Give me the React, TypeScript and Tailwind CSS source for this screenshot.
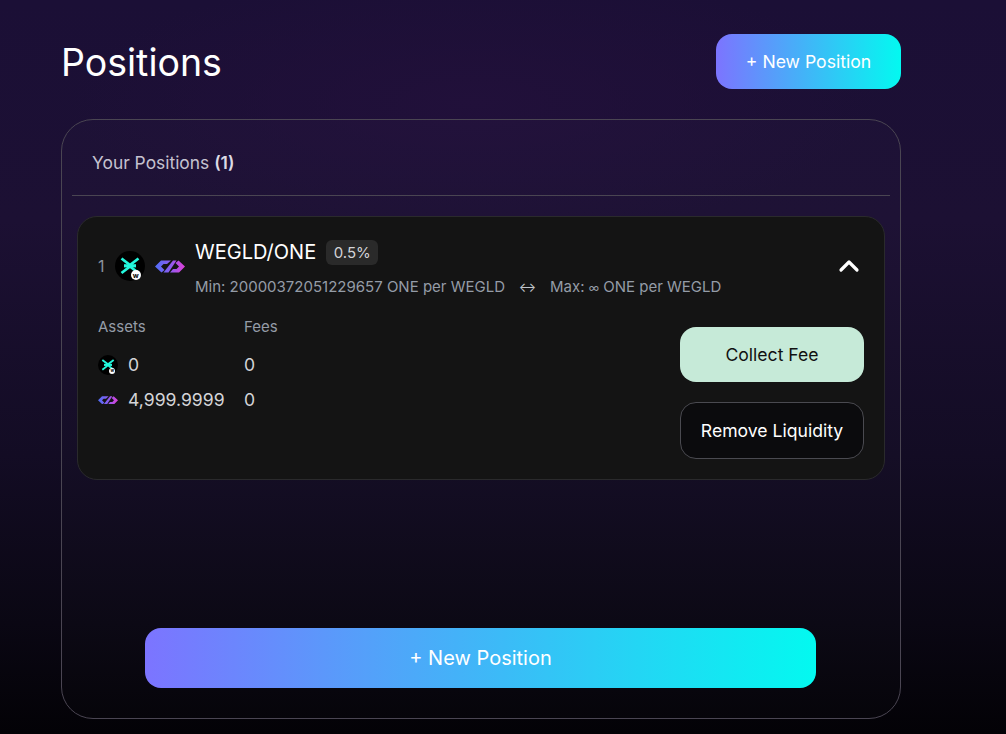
import { ChevronUp } from 'lucide-react';

const inter = { fontFamily: 'Inter, sans-serif' };

function MexIcon({ size, badge }: { size: number; badge: number }) {
  return (
    <div
      className="relative shrink-0 rounded-full bg-black"
      style={{ width: size, height: size }}
    >
      <svg viewBox="0 0 30 30" className="h-full w-full">
        <g fill="none" stroke="#23f7dd" strokeWidth="2.8">
          <path d="M6.5 7.5 L15 14 L23.5 7.5" />
          <path d="M6.5 22 L15 15.5 L23.5 22" />
        </g>
        <rect x="9" y="13.2" width="12" height="3.2" fill="#23f7dd" />
      </svg>
      <div
        className="absolute flex items-center justify-center rounded-full bg-white font-bold leading-none text-black"
        style={{ width: badge, height: badge, right: size * 0.14, bottom: 1, fontSize: badge * 0.7 }}
      >
        w
      </div>
    </div>
  );
}

function OneIcon({ width, id }: { width: number; id: string }) {
  return (
    <svg viewBox="0 0 30 13" style={{ width, height: (width * 13) / 30 }} className="shrink-0">
      <defs>
        <linearGradient id={id} gradientUnits="userSpaceOnUse" x1="0" x2="30" y1="0" y2="0">
          <stop offset="0" stopColor="#4f6ef7" />
          <stop offset="0.5" stopColor="#8a5cf0" />
          <stop offset="1" stopColor="#e040d8" />
        </linearGradient>
      </defs>
      <g fill={`url(#${id})`}>
        <path d="M0 6.5 L6 0.5 L16 0.5 L12 4 L8.5 4 L6 6.5 L9.5 10 L6.5 12.5 Z" />
        <path d="M8.5 12.5 L13.5 12.5 L21.5 0.5 L18 0.5 Z" />
        <path d="M30 6.5 L24 12.5 L15 12.5 L18 9 L21.5 9 L24 6.5 L20.5 3 L23.5 0.5 Z" />
      </g>
    </svg>
  );
}

export default function App() {
  return (
    <div
      style={inter}
      className="h-[734px] w-[1006px] overflow-hidden bg-[radial-gradient(ellipse_40%_18%_at_47%_14%,#21103a_0%,#21103a00_100%),linear-gradient(180deg,#1b0f36_0%,#1c1033_30%,#130c24_62%,#0a0713_85%,#030206_100%)] pl-[61px] pt-[34px] text-white"
    >
      <div className="w-[840px]">
        <div className="flex items-start justify-between">
          <h1 className="h-[55px] text-[37.5px] leading-[57px] font-normal">Positions</h1>
          <button className="h-[55px] w-[185px] rounded-2xl bg-[linear-gradient(90deg,#7c74ff,#03f9f0)] pt-[1px] text-[17.6px]">
            + New Position
          </button>
        </div>

        <div className="mt-[30px] flex h-[600px] flex-col rounded-[32px] border border-[#4a4552] bg-[#ffffff03] px-[10px]">
          <div className="flex h-[76px] items-center border-b border-[#4a4552] pl-[20px] pt-[12px] text-[17.4px] text-[#c5c2d0]">
            Your Positions&nbsp;<span className="font-semibold text-[#dcdae4]">(1)</span>
          </div>

          <div className="mx-[5px] mt-[20px] h-[264px] rounded-[20px] border border-[#2a2a2c] bg-[#141414] px-[20px] pt-[22px]">
            <div className="flex items-start">
              <div className="flex items-center pt-[12px]">
                <span className="w-[17px] text-[16px] text-[#8b929c]">1</span>
                <MexIcon size={30} badge={10} />
                <div className="ml-[10px]">
                  <OneIcon width={30} id="one-lg" />
                </div>
              </div>
              <div className="ml-[10px]">
                <div className="flex items-center">
                  <span className="text-[20px] leading-[26px]">WEGLD/ONE</span>
                  <span className="ml-[10px] rounded-md bg-[#2a2a2a] px-[7.5px] py-[3px] text-[15px] leading-[19px] text-[#d4d4d8]">0.5%</span>
                </div>
                <div className="mt-[13px] flex h-[18px] items-center text-[15px] leading-[18px] text-[#949ca7]">
                  <span>Min: 20000372051229657 ONE per WEGLD</span>
                  <span className="w-[45px] text-center text-[13px] text-[#c0c4ca]">↔</span>
                  <span>
                    Max: <span className="text-[11px] leading-none">∞</span> ONE per WEGLD
                  </span>
                </div>
              </div>
              <ChevronUp className="ml-auto mr-[-1px] mt-[11px] h-8 w-8" strokeWidth={2.4} />
            </div>

            <div className="mt-[20px] flex justify-between">
              <div className="grid grid-cols-[146px_auto] content-start">
                <span className="text-[15px] leading-[22px] text-[#949ca7]">Assets</span>
                <span className="text-[15px] leading-[22px] text-[#949ca7]">Fees</span>
                <div className="mt-[15px] flex items-center gap-[10px] text-[17.6px] leading-[24px] text-[#d4d4d8]">
                  <MexIcon size={20} badge={6} />
                  <span>0</span>
                </div>
                <span className="mt-[15px] text-[17.6px] leading-[24px] text-[#d4d4d8]">0</span>
                <div className="mt-[11px] flex items-center gap-[10px] text-[17.6px] leading-[24px] text-[#d4d4d8]">
                  <OneIcon width={20} id="one-sm" />
                  <span>4,999.9999</span>
                </div>
                <span className="mt-[11px] text-[17.6px] leading-[24px] text-[#d4d4d8]">0</span>
              </div>
              <div className="mt-[11px] flex w-[184px] flex-col gap-[20px]">
                <button className="h-[55px] rounded-2xl bg-[#c6ead8] pt-[2px] text-[17.6px] text-[#111]">Collect Fee</button>
                <button className="h-[57px] rounded-2xl border border-[#4a4a50] bg-[#0b0b0d] pt-[2px] text-[17.6px]">Remove Liquidity</button>
              </div>
            </div>
          </div>

          <button className="ml-[73px] mt-[148px] h-[60px] w-[671px] rounded-2xl bg-[linear-gradient(90deg,#7c74ff,#03f9f0)] text-[20px]">
            + New Position
          </button>
        </div>
      </div>
    </div>
  );
}
